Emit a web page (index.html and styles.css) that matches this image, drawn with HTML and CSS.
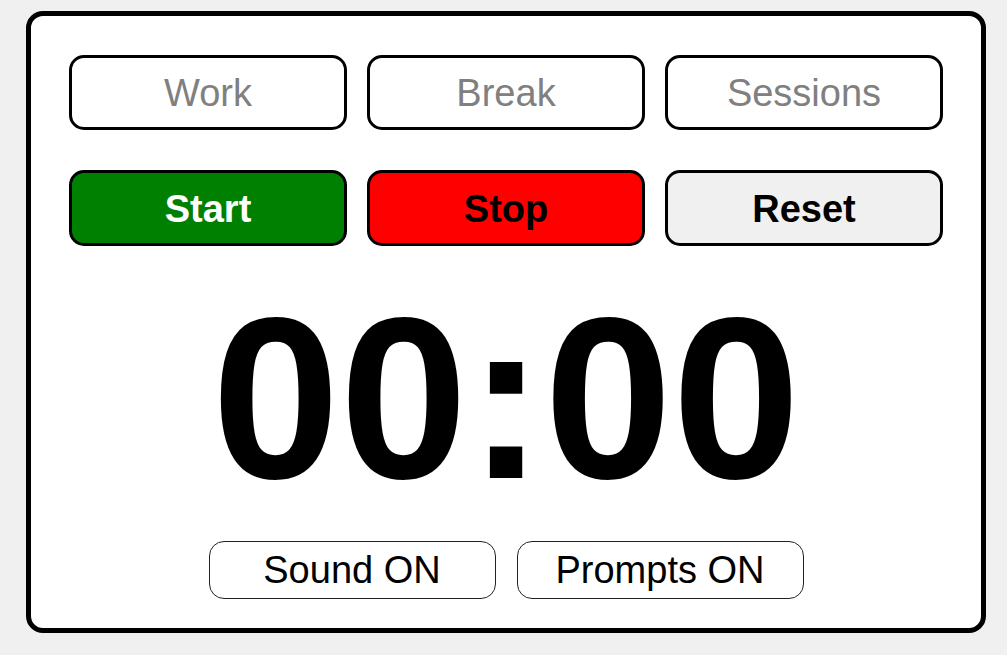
FILE: index.html
```html
<!DOCTYPE html>
<html>
<head>
<meta charset="utf-8">
<link rel="stylesheet" href="styles.css">
</head>
<body>
<div class="card">
  <div class="row modes">
    <button class="btn mode">Work</button>
    <button class="btn mode">Break</button>
    <button class="btn mode">Sessions</button>
  </div>
  <div class="row controls">
    <button class="btn ctrl start">Start</button>
    <button class="btn ctrl stop">Stop</button>
    <button class="btn ctrl reset">Reset</button>
  </div>
  <div class="timer">00:00</div>
  <div class="toggles">
    <button class="toggle">Sound ON</button>
    <button class="toggle">Prompts ON</button>
  </div>
</div>
</body>
</html>
```

FILE: styles.css
```css
html, body {
  margin: 0;
  padding: 0;
  background: #f0f0f0;
  font-family: "Liberation Sans", Arial, sans-serif;
}

body {
  padding: 11px 0 0 26px;
}

.card {
  box-sizing: border-box;
  width: 960px;
  height: 622px;
  background: #ffffff;
  border: 5px solid #000000;
  border-radius: 17px;
  padding: 39px 38px 29px;
}

.row {
  display: grid;
  grid-template-columns: repeat(3, 1fr);
  column-gap: 20px;
}

.controls {
  margin-top: 40px;
}

.btn {
  box-sizing: border-box;
  height: 75px;
  border: 3px solid #000000;
  border-radius: 15px;
  font-family: "Liberation Sans", Arial, sans-serif;
  font-size: 38px;
  padding: 2px 0 0;
  margin: 0;
  background: #ffffff;
}

.ctrl {
  height: 76px;
  font-weight: bold;
}

.mode {
  color: #808080;
}

.start {
  background: #008000;
  color: #ffffff;
}

.stop {
  background: #ff0000;
  color: #000000;
}

.reset {
  background: #f0f0f0;
  color: #000000;
}

.timer {
  margin-top: 38px;
  height: 230px;
  font-size: 230px;
  line-height: 230px;
  font-weight: bold;
  text-align: center;
  color: #000000;
}

.toggles {
  margin-top: 27px;
  display: flex;
  justify-content: center;
  gap: 21px;
}

.toggle {
  box-sizing: border-box;
  width: 287px;
  height: 58px;
  border: 1px solid #222222;
  border-radius: 15px;
  background: #ffffff;
  color: #000000;
  font-family: "Liberation Sans", Arial, sans-serif;
  font-size: 38px;
  padding: 0;
  margin: 0;
}
```
